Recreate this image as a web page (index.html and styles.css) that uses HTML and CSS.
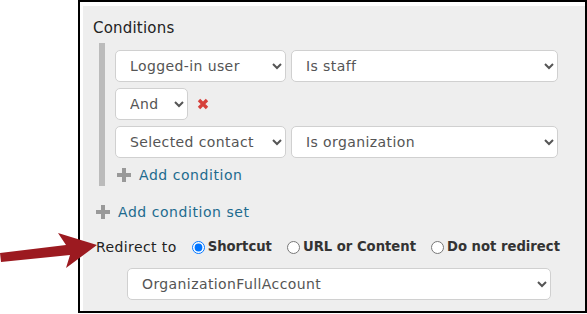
FILE: index.html
```html
<!DOCTYPE html>
<html lang="en">
<head>
    <meta charset="utf-8" />
    <title>Conditions</title>
    <link rel="stylesheet" href="styles.css">
</head>
<body>
    <svg class="pointer" width="100" height="40" viewBox="0 230 100 40">
        <polygon points="0,253 66,245 58,233 97,245 66,268 70,255 1,262" fill="#9c1a20" />
    </svg>
    <div class="frame">
        <div class="panel">
            <div class="title">Conditions</div>
            <div class="condition-set">
                <div class="row">
                    <select class="field subject"><option>Logged-in user</option></select>
                    <select class="field test"><option>Is staff</option></select>
                </div>
                <div class="row">
                    <select class="field joiner"><option>And</option></select>
                    <svg class="remove" width="12" height="12" viewBox="0 0 12 12">
                        <path d="M2 2 L10 10 M10 2 L2 10" stroke="#d6413b" stroke-width="3.4" />
                    </svg>
                </div>
                <div class="row">
                    <select class="field subject"><option>Selected contact</option></select>
                    <select class="field test"><option>Is organization</option></select>
                </div>
                <a class="add" href="#">
                    <svg width="14" height="14" viewBox="0 0 14 14"><path d="M7 0 V14 M0 7 H14" stroke="#999" stroke-width="4" /></svg>
                    Add condition
                </a>
            </div>
            <a class="add add-set" href="#">
                <svg width="14" height="14" viewBox="0 0 14 14"><path d="M7 0 V14 M0 7 H14" stroke="#999" stroke-width="4" /></svg>
                Add condition set
            </a>
            <div class="redirect">
                <span class="label">Redirect to</span>
                <label><input type="radio" name="redirect" checked> Shortcut</label>
                <label><input type="radio" name="redirect"> URL or Content</label>
                <label><input type="radio" name="redirect"> Do not redirect</label>
            </div>
            <select class="field target"><option>OrganizationFullAccount</option></select>
        </div>
    </div>
</body>
</html>
```

FILE: styles.css
```css
body {
    margin: 0;
    background-color: #fff;
    font-family: "DejaVu Sans", Verdana, sans-serif;
    position: relative;
}

.pointer {
    position: absolute;
    left: 0;
    top: 230px;
    z-index: 2;
}

.frame {
    margin-left: 78px;
    width: 509px;
    height: 313px;
    box-sizing: border-box;
    border: 2px solid #000;
    padding: 4px 0 0 3px;
    overflow: hidden;
}

.panel {
    background-color: #eee;
    height: 100%;
    padding: 11px 0 0 10px;
    box-sizing: border-box;
}

.title {
    font-size: 15px;
    color: #222;
    line-height: 22px;
    letter-spacing: 0.2px;
}

.condition-set {
    margin: 4px 0 0 6px;
    border-left: 6px solid #bbb;
    padding: 7px 0 1px 10px;
    display: flex;
    flex-direction: column;
    gap: 6px;
}

.row {
    display: flex;
    align-items: center;
    gap: 5px;
}

.field {
    height: 32px;
    box-sizing: border-box;
    border: 1px solid #d0d0d0;
    border-radius: 5px;
    background-color: #fff;
    color: #555;
    font-family: inherit;
    font-size: 14px;
    letter-spacing: 0.4px;
    padding: 0 8px 0 10px;
}

.subject { width: 171px; }
.test { width: 267px; }
.joiner { width: 73px; }

.remove {
    margin-left: 4px;
}

.add {
    display: flex;
    align-items: center;
    gap: 8px;
    color: #1d6b8e;
    text-decoration: none;
    font-size: 14px;
    letter-spacing: 0.55px;
    line-height: 20px;
    padding: 1px 0 0 2px;
}

.add-set {
    margin: 16px 0 0 3px;
    padding: 0;
}

.redirect {
    display: flex;
    align-items: center;
    margin: 14px 0 0 3px;
    font-size: 14px;
    color: #333;
    line-height: 22px;
}

.redirect .label {
    color: #222;
    letter-spacing: 0.4px;
    margin-right: 15px;
}

.redirect label {
    font-weight: bold;
    font-size: 13.2px;
    display: flex;
    align-items: center;
    margin-right: 15px;
}

.redirect input {
    margin: 0 3px 0 0;
}

.target {
    display: block;
    width: 424px;
    margin: 10px 0 0 34px;
}
```
